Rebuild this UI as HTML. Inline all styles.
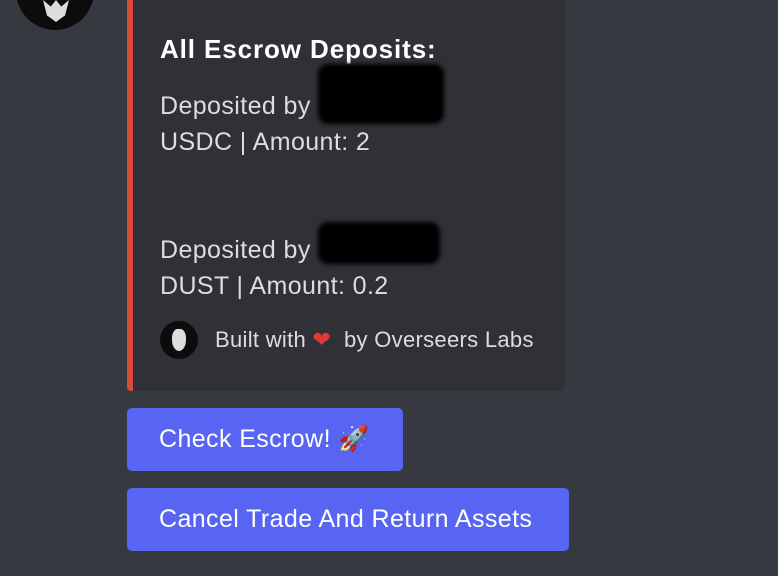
<!DOCTYPE html>
<html><head><style>
body{margin:0;width:778px;height:576px;background:#36393f;overflow:hidden;font-family:"Liberation Sans","DejaVu Sans",sans-serif;position:relative}
.av{position:absolute;left:16px;top:-48px;width:78px;height:78px;border-radius:50%;background:#0c0c0c}
.embed{position:absolute;left:127px;top:-10px;width:439px;height:401px;background:#2f3136;border-left:6px solid #d84a3a;border-radius:0 0 8px 4px;box-sizing:border-box}
.t{position:absolute;color:#fff;white-space:nowrap}
.b{position:absolute;left:127px;background:#5865f2;border-radius:5px;color:#fff;font-size:25px;letter-spacing:0.4px;box-sizing:border-box;padding-left:32px;line-height:63px}
.red{position:absolute;background:#000;border-radius:10px;filter:blur(2px)}
.body{font-size:25px;letter-spacing:0.4px;color:#dcddde}
</style></head><body>
<div class="av"><div style="position:absolute;left:27px;top:48px;width:26px;height:22px;background:#ddd;clip-path:polygon(0 0,30% 30%,50% 0,70% 30%,100% 0,85% 70%,50% 100%,15% 70%)"></div></div>
<div class="embed"></div>
<div class="t" style="left:160px;top:34px;font-size:26px;letter-spacing:0.9px;font-weight:bold">All Escrow Deposits:</div>
<div class="t body" style="left:160px;top:92px">Deposited by</div>
<div class="t body" style="left:160px;top:128px">USDC | Amount: 2</div>
<div class="red" style="left:318px;top:64px;width:126px;height:60px"></div>
<div class="t body" style="left:160px;top:236px">Deposited by</div>
<div class="t body" style="left:160px;top:272px">DUST | Amount: 0.2</div>
<div class="red" style="left:318px;top:222px;width:122px;height:42px"></div>
<div style="position:absolute;left:160px;top:321px;width:38px;height:38px;border-radius:50%;background:#0c0c0c"><div style="position:absolute;left:12px;top:8px;width:14px;height:22px;background:#ddd;border-radius:40% 40% 50% 50%"></div></div>
<div class="t" style="left:215px;top:327px;font-size:22px;letter-spacing:0.3px;color:#dcddde">Built with <span style="color:#e0373a">❤</span>&nbsp; by Overseers Labs</div>
<div class="b" style="top:408px;width:276px;height:63px">Check Escrow! 🚀</div>
<div class="b" style="top:488px;width:442px;height:63px">Cancel Trade And Return Assets</div>
</body></html>
